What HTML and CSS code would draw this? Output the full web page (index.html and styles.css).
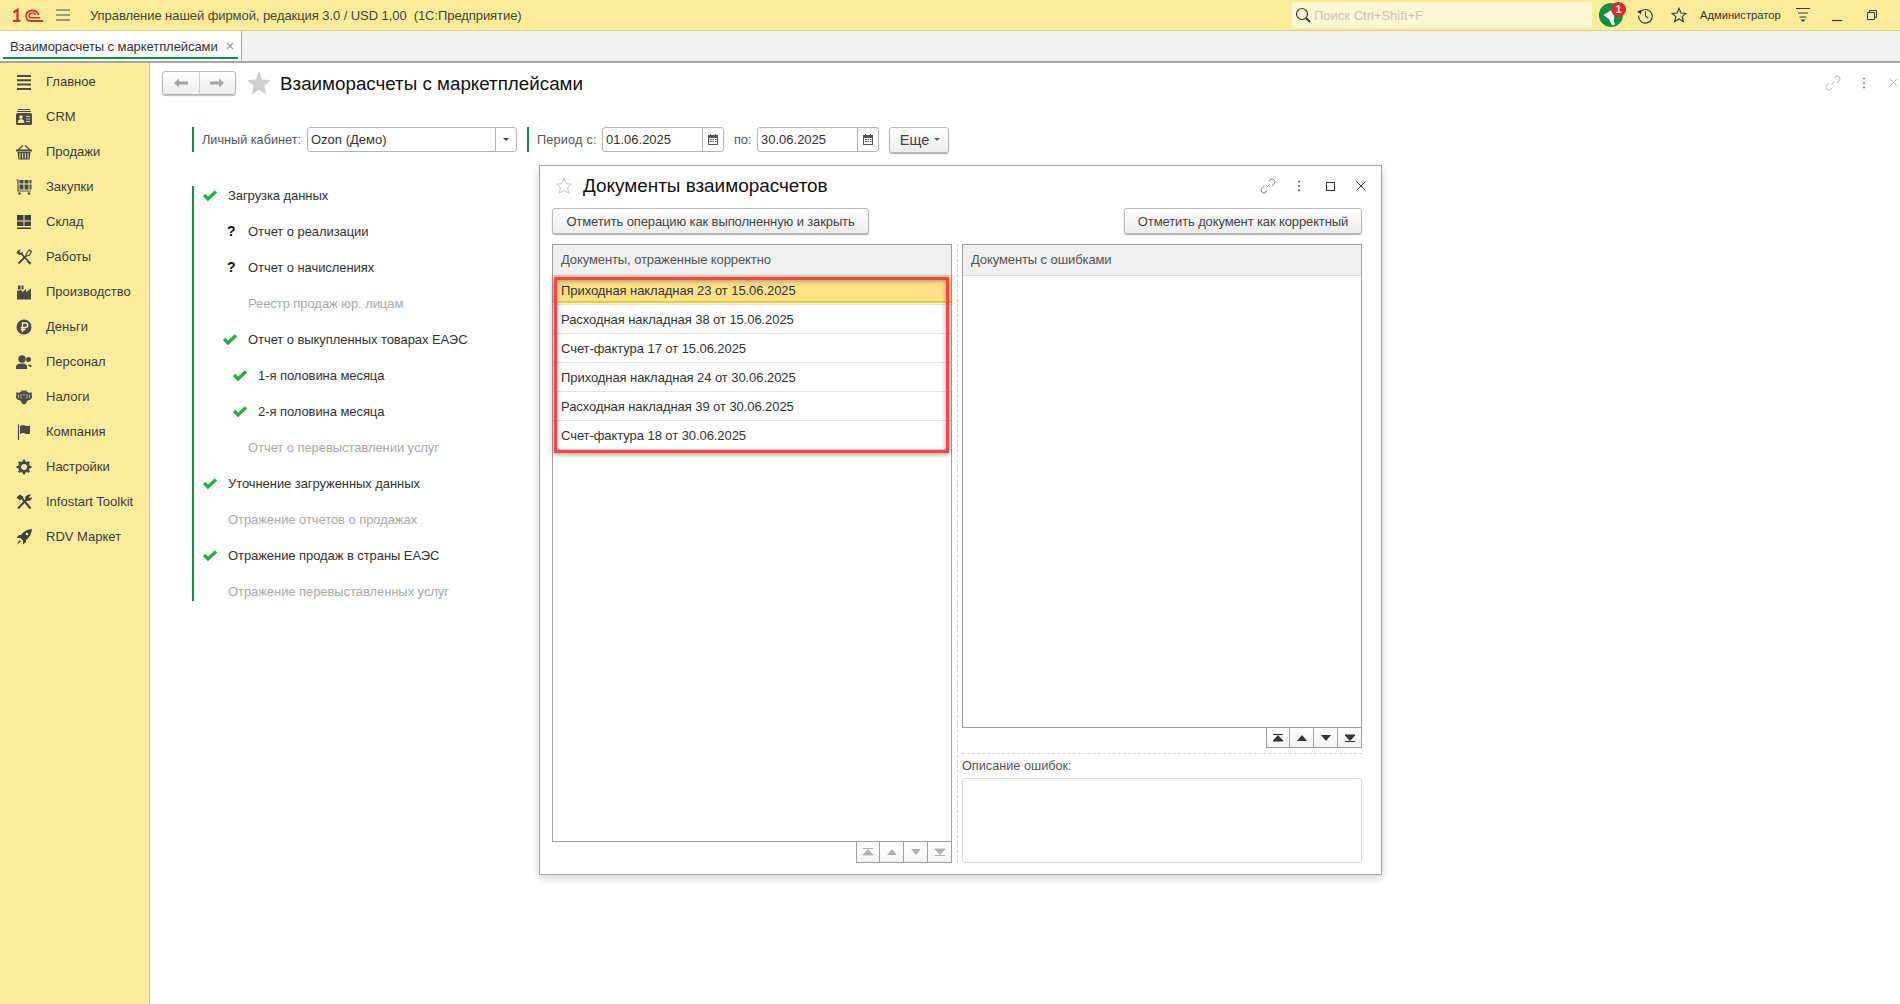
FILE: index.html
```html
<!DOCTYPE html>
<html lang="ru">
<head>
<meta charset="utf-8">
<title>Взаиморасчеты с маркетплейсами</title>
<link rel="stylesheet" href="styles.css">
</head>
<body>
<div class="app">
  <header class="topbar">
    <svg class="logo" viewBox="0 0 30 14"><path d="M.5 4.500 4.500 1.800V13" fill="none" stroke="#d5342c" stroke-width="2.300"/><path d="M0 12.900H7.500" stroke="#d5342c" stroke-width="2"/><path d="M25.500 7A6.500 6.500 0 0 0 13 7.500Q13 13 18 13H30" fill="none" stroke="#d5342c" stroke-width="1.800"/><path d="M22.500 7A3.500 3.500 0 0 0 16 7.500Q16 9.800 19 9.800H27" fill="none" stroke="#d5342c" stroke-width="1.600"/></svg>
    <svg class="burger" viewBox="0 0 14 12"><path d="M0 1H14M0 6H14M0 11H14" stroke="#4a4a3a" stroke-width="1"/></svg>
    <div class="apptitle">Управление нашей фирмой, редакция 3.0 / USD 1,00&nbsp; (1С:Предприятие)</div>
    <div class="search">
      <svg class="search-ico" viewBox="0 0 16 16"><circle cx="7" cy="7" r="5.500" fill="none" stroke="#333" stroke-width="1.200"/><path d="M11 11 15 15" stroke="#333" stroke-width="2"/></svg>
      <span class="search-ph">Поиск Ctrl+Shift+F</span>
    </div>
    <div class="notify">
      <svg class="notify-ico" viewBox="0 0 24 24"><circle cx="12" cy="12" r="12" fill="#0a9142"/><path d="M4.500 12 15 5.500V20Z" fill="#fff"/><path d="M10 16.500H14L16 21.500 13.500 22.500Z" fill="#fff"/></svg>
      <span class="badge">1</span>
    </div>
    <svg class="ti ti-hist" viewBox="0 0 18 18"><path d="M3.200 5.500A7.200 7.200 0 1 1 1.800 9" fill="none" stroke="#3a3a30" stroke-width="1.200"/><path d="M0 5 4.500 3 4.500 8Z" fill="#3a3a30"/><path d="M9 4.500V9.500L12 12" fill="none" stroke="#3a3a30" stroke-width="1.200"/></svg>
    <svg class="ti ti-star" viewBox="0 0 18 18"><path d="M9 1.500 11.200 6.700 16.800 7.200 12.500 10.800 13.900 16.300 9 13.400 4.100 16.300 5.500 10.800 1.200 7.200 6.800 6.700Z" fill="none" stroke="#3a3a30" stroke-width="1.300"/></svg>
    <span class="user">Администратор</span>
    <svg class="ti ti-menu" viewBox="0 0 14 16"><path d="M0 1.500H14M2 6H12M3.500 10H10.500" stroke="#3a3a30"/><path d="M4.500 12.500H9.500L7 15Z" fill="#3a3a30"/></svg>
    <svg class="ti ti-min" viewBox="0 0 10 14"><path d="M0 12.500H10" stroke="#3a3a30" stroke-width="1.200"/></svg>
    <svg class="ti ti-res" viewBox="0 0 10 10"><path d="M2.500 2V.5H9.500V7.500H7.500M.5 2.500H7.500V9.500H.5Z" fill="none" stroke="#3a3a30"/></svg>
  </header>

  <nav class="tabbar">
    <div class="tab">
      <span class="tab-text">Взаиморасчеты с маркетплейсами</span>
      <svg class="tab-x" viewBox="0 0 8 8"><path d="M1 1 7 7M7 1 1 7" stroke="#9a9a9a" stroke-width="1.300"/></svg>
    </div>
  </nav>

  <div class="body">
    <aside class="sidebar">
      <div class="sb-item"><svg class="sb-ico" viewBox="0 0 16 16"><path d="M1 2H15M1 6.300H15M1 10.600H15M1 14.900H15" stroke="#4a4a4a" stroke-width="2"/></svg><span>Главное</span></div>
      <div class="sb-item"><svg class="sb-ico" viewBox="0 0 16 16"><path d="M2 .5H14M1 2.500H15" stroke="#4a4a4a"/><rect x="0" y="4" width="16" height="12" rx="1.500" fill="#4a4a4a"/><circle cx="5" cy="8" r="1.800" fill="#fbec9c"/><path d="M2 13.500Q2 10.500 5 10.500T8 13.500ZM10 7.500H14M10 10H14M10 12.500H14" fill="#fbec9c" stroke="#fbec9c" stroke-width=".8"/></svg><span>CRM</span></div>
      <div class="sb-item"><svg class="sb-ico" viewBox="0 0 16 16"><path d="M2 6 7 1.500M14 6 9 1.500" stroke="#4a4a4a" stroke-width="1.200"/><rect x="0" y="5.500" width="16" height="2" fill="#4a4a4a"/><path d="M1.500 8H14.500L13.500 15.500H2.500Z" fill="#4a4a4a"/><path d="M4 9V14.500M6.700 9V14.500M9.300 9V14.500M12 9V14.500" stroke="#fbec9c"/></svg><span>Продажи</span></div>
      <div class="sb-item"><svg class="sb-ico" viewBox="0 0 16 16"><path d="M.5 1H2V12H15" fill="none" stroke="#4a4a4a" stroke-width="1.200"/><path d="M3.500 1H7.500V4.500H3.500ZM8.500 1H12.500V4.500H8.500ZM3.500 5.500H7.500V10.500H3.500ZM8.500 5.500H12.500V10.500H8.500ZM13.500 1H15.500V4.500H13.500ZM13.500 5.500H15.500V10.500H13.500Z" fill="#4a4a4a"/><circle cx="3.500" cy="14.500" r="1.300" fill="#4a4a4a"/><circle cx="13" cy="14.500" r="1.300" fill="#4a4a4a"/></svg><span>Закупки</span></div>
      <div class="sb-item"><svg class="sb-ico" viewBox="0 0 16 16"><path d="M1 1H7.500V6.500H1ZM8.500 1H15V6.500H8.500ZM1 7.500H7.500V12H1ZM8.500 7.500H15V12H8.500ZM1 13.500H15V15H1Z" fill="#3f3f3f"/></svg><span>Склад</span></div>
      <div class="sb-item"><svg class="sb-ico" viewBox="0 0 16 16"><path d="M2.500 14.500 10 7M5.500 5 13 13" stroke="#4a4a4a" stroke-width="1.800" fill="none"/><path d="M.5 4Q1 .5 5 .5L3.500 2.500 5 4 7 2.500Q7.500 6 3.500 6Z" fill="#4a4a4a"/><path d="M10 5.500 13 1 15.500 2.500 13.500 6 10.500 7Z" fill="none" stroke="#4a4a4a" stroke-width="1.200"/><path d="M12 11.500 15.500 14 14 15.800 11 13Z" fill="#4a4a4a"/></svg><span>Работы</span></div>
      <div class="sb-item"><svg class="sb-ico" viewBox="0 0 16 16"><path d="M1 15.500V7L5 6 6.500 8 10 5V8L15 4.500V15.500Z" fill="#4a4a4a"/><path d="M2 1.500H4.500V5.500H2ZM5.500 1.500H7.500V5.500H5.500Z" fill="#4a4a4a"/></svg><span>Производство</span></div>
      <div class="sb-item"><svg class="sb-ico" viewBox="0 0 16 16"><circle cx="8" cy="8" r="7.500" fill="#4a4a4a"/><path d="M6.500 13V4H9.500A2.200 2.200 0 0 1 9.500 8.500H4.800M4.800 10.500H9.500" fill="none" stroke="#fbec9c" stroke-width="1.500"/></svg><span>Деньги</span></div>
      <div class="sb-item"><svg class="sb-ico" viewBox="0 0 16 16"><circle cx="6" cy="5" r="3.700" fill="#4a4a4a"/><path d="M0 15V12.500Q0 10.500 4 9.500H8Q11 10.500 11 12.500V15Z" fill="#4a4a4a"/><circle cx="12.500" cy="5.500" r="2.500" fill="#4a4a4a"/><path d="M12 10.500Q15.500 10.500 16 12.500L14.500 13 12 11.500Z" fill="#4a4a4a"/></svg><span>Персонал</span></div>
      <div class="sb-item"><svg class="sb-ico" viewBox="0 0 16 16"><path d="M6 3 5 1 8 2 11 1 10 3 11.500 2.500 13 4 15.500 3 16 8.500 14 11 11.500 11.500 10 14.500 8 15.500 6 14.500 4.500 11.500 2 11 0 8.500 .5 3 3 4 4.500 2.500Z" fill="#4a4a4a"/><path d="M2.500 5.500V9M5 5V9.500M8 4.500V7M11 5V9.500M13.500 5.500V9" stroke="#fbec9c" stroke-width=".7"/></svg><span>Налоги</span></div>
      <div class="sb-item"><svg class="sb-ico" viewBox="0 0 16 16"><path d="M2.500 .5V16" stroke="#4a4a4a" stroke-width="1.200"/><path d="M4 2Q8 .5 9 1.500T14 1.500V9.500Q11 10.500 9 9.500T4 10Z" fill="#4a4a4a"/></svg><span>Компания</span></div>
      <div class="sb-item"><svg class="sb-ico" viewBox="0 0 16 16"><circle cx="8" cy="8" r="4.500" fill="none" stroke="#4a4a4a" stroke-width="3"/><path d="M8 .5V15.500M.5 8H15.500M2.700 2.700 13.300 13.300M13.300 2.700 2.700 13.300" stroke="#4a4a4a" stroke-width="2.200" stroke-dasharray="2.800 9.400"/></svg><span>Настройки</span></div>
      <div class="sb-item"><svg class="sb-ico" viewBox="0 0 16 16"><path d="M2 14.500 11 5M5 3 14.500 14.500" stroke="#3f3f3f" stroke-width="2"/><path d="M.5 3.500 4 .5 7.500 3 4 6.500Z" fill="#3f3f3f"/><path d="M9 4Q10 0 15 .5L13 3 14 4.500 16 3Q16 7 11.500 7Z" fill="#3f3f3f"/></svg><span>Infostart Toolkit</span></div>
      <div class="sb-item"><svg class="sb-ico" viewBox="0 0 16 16"><path d="M16 0Q9 .5 5 6L3 6 .5 9H4.500L7 11.500V15.500L10 13V11Q15.500 7 16 0Z" fill="#3f3f3f"/><circle cx="11" cy="5" r="1.300" fill="#fbec9c"/><path d="M3.500 11 5 12.500 1 15.500Z" fill="#3f3f3f"/></svg><span>RDV Маркет</span></div>
    </aside>

    <main class="content">
      <div class="head">
        <div class="navbtns">
          <button class="navbtn"><svg viewBox="0 0 14 10"><path d="M0 5 5 .5V3.500H14V6.500H5V9.500Z" fill="#a5a5a5"/></svg></button>
          <button class="navbtn"><svg viewBox="0 0 14 10"><path d="M14 5 9 .5V3.500H0V6.500H9V9.500Z" fill="#a5a5a5"/></svg></button>
        </div>
        <svg class="head-star" viewBox="0 0 24 24"><path d="M12 0 15.300 8.500 24 9.200 17.300 14.800 19.400 23.500 12 18.700 4.600 23.500 6.700 14.800 0 9.200 8.700 8.500Z" fill="#cfcfcf"/></svg>
        <h1 class="page-title">Взаиморасчеты с маркетплейсами</h1>
        <div class="head-tools">
          <svg class="link-ico dim" viewBox="0 0 16 16"><path d="M6.500 9.500 9.500 6.500M9 3 11 1.300Q12.500 .3 14 1.800T14.700 5L11.800 8M7 13 5 14.700Q3.500 15.700 2 14.200T1.300 11L4.200 8" fill="none" stroke="#b5b5b5"/></svg>
          <svg class="dots dim" viewBox="0 0 4 12"><circle cx="2" cy="1.500" r="1.100" fill="#8c8c8c"/><circle cx="2" cy="6" r="1.100" fill="#8c8c8c"/><circle cx="2" cy="10.500" r="1.100" fill="#8c8c8c"/></svg>
          <svg class="close-ico" viewBox="0 0 10 10"><path d="M1 1 9 9M9 1 1 9" stroke="#b0b0b0"/></svg>
        </div>
      </div>

      <div class="filters">
        <div class="mark"></div>
        <label class="lbl lbl-acc">Личный кабинет:</label>
        <div class="field f-acc"><span class="val">Ozon (Демо)</span><span class="seg"><i class="arr"></i></span></div>
        <div class="mark mark-2"></div>
        <label class="lbl lbl-from">Период с:</label>
        <div class="field f-date"><span class="val">01.06.2025</span><span class="seg seg-cal"><svg class="cal" viewBox="0 0 10 11"><path d="M2.500 0V2M7.500 0V2" stroke="#555"/><rect x=".5" y="1.500" width="9" height="9" fill="none" stroke="#555"/><path d="M1 2H9V4H1ZM2 5H4V6H2ZM4.500 5H6V6H4.500ZM7 5H8.500V6H7ZM2 7H4V8H2ZM4.500 7H6V8H4.500ZM7 7H8.500V8H7Z" fill="#555"/></svg></span></div>
        <label class="lbl lbl-to">по:</label>
        <div class="field f-date"><span class="val">30.06.2025</span><span class="seg seg-cal"><svg class="cal" viewBox="0 0 10 11"><path d="M2.500 0V2M7.500 0V2" stroke="#555"/><rect x=".5" y="1.500" width="9" height="9" fill="none" stroke="#555"/><path d="M1 2H9V4H1ZM2 5H4V6H2ZM4.500 5H6V6H4.500ZM7 5H8.500V6H7ZM2 7H4V8H2ZM4.500 7H6V8H4.500ZM7 7H8.500V8H7Z" fill="#555"/></svg></span></div>
        <button class="btn btn-more">Еще<i class="arr arr-more"></i></button>
      </div>

      <ul class="steps">
        <li class="step l0"><svg class="chk" viewBox="0 0 14 11"><path d="M1 5 5 9 13 1.500" fill="none" stroke="#22b03a" stroke-width="3.300"/></svg><span>Загрузка данных</span></li>
        <li class="step l1"><span class="q">?</span><span>Отчет о реализации</span></li>
        <li class="step l1"><span class="q">?</span><span>Отчет о начислениях</span></li>
        <li class="step l1 off"><span>Реестр продаж юр. лицам</span></li>
        <li class="step l1"><svg class="chk" viewBox="0 0 14 11"><path d="M1 5 5 9 13 1.500" fill="none" stroke="#22b03a" stroke-width="3.300"/></svg><span>Отчет о выкупленных товарах ЕАЭС</span></li>
        <li class="step l2"><svg class="chk" viewBox="0 0 14 11"><path d="M1 5 5 9 13 1.500" fill="none" stroke="#22b03a" stroke-width="3.300"/></svg><span>1-я половина месяца</span></li>
        <li class="step l2"><svg class="chk" viewBox="0 0 14 11"><path d="M1 5 5 9 13 1.500" fill="none" stroke="#22b03a" stroke-width="3.300"/></svg><span>2-я половина месяца</span></li>
        <li class="step l1 off"><span>Отчет о перевыставлении услуг</span></li>
        <li class="step l0"><svg class="chk" viewBox="0 0 14 11"><path d="M1 5 5 9 13 1.500" fill="none" stroke="#22b03a" stroke-width="3.300"/></svg><span>Уточнение загруженных данных</span></li>
        <li class="step l0 off"><span>Отражение отчетов о продажах</span></li>
        <li class="step l0"><svg class="chk" viewBox="0 0 14 11"><path d="M1 5 5 9 13 1.500" fill="none" stroke="#22b03a" stroke-width="3.300"/></svg><span>Отражение продаж в страны ЕАЭС</span></li>
        <li class="step l0 off"><span>Отражение перевыставленных услуг</span></li>
      </ul>

      <section class="modal">
        <div class="m-head">
          <svg class="m-star" viewBox="0 0 18 18"><path d="M9 1.500 11.200 6.700 16.800 7.200 12.500 10.800 13.900 16.300 9 13.400 4.100 16.300 5.500 10.800 1.200 7.200 6.800 6.700Z" fill="none" stroke="#c4c4c4"/></svg>
          <h2 class="m-title">Документы взаиморасчетов</h2>
          <div class="m-tools">
            <svg class="link-ico" viewBox="0 0 16 16"><path d="M6.500 9.500 9.500 6.500M9 3 11 1.300Q12.500 .3 14 1.800T14.700 5L11.800 8M7 13 5 14.700Q3.500 15.700 2 14.200T1.300 11L4.200 8" fill="none" stroke="#777"/></svg>
            <svg class="dots" viewBox="0 0 4 12"><circle cx="2" cy="1.500" r="1.100" fill="#666"/><circle cx="2" cy="6" r="1.100" fill="#666"/><circle cx="2" cy="10.500" r="1.100" fill="#666"/></svg>
            <svg class="m-square" viewBox="0 0 9 9"><rect x=".5" y=".5" width="8" height="8" fill="none" stroke="#333"/></svg>
            <svg class="m-close" viewBox="0 0 10 10"><path d="M.5 .5 9.500 9.500M9.500 .5 .5 9.500" stroke="#444"/></svg>
          </div>
        </div>
        <div class="m-actions">
          <button class="btn btn-op">Отметить операцию как выполненную и закрыть</button>
          <button class="btn btn-doc">Отметить документ как корректный</button>
        </div>
        <div class="m-cols">
          <div class="col col-left">
            <div class="table">
              <div class="t-head">Документы, отраженные корректно</div>
              <div class="row row-sel">Приходная накладная 23 от 15.06.2025</div>
              <div class="row">Расходная накладная 38 от 15.06.2025</div>
              <div class="row">Счет-фактура 17 от 15.06.2025</div>
              <div class="row">Приходная накладная 24 от 30.06.2025</div>
              <div class="row">Расходная накладная 39 от 30.06.2025</div>
              <div class="row">Счет-фактура 18 от 30.06.2025</div>
            </div>
            <div class="pager pager-off">
              <span class="pg"><svg viewBox="0 0 12 8"><path d="M1 .5H11M6 1.500 1 7H11Z" stroke="currentColor" fill="currentColor"/></svg></span>
              <span class="pg"><svg viewBox="0 0 12 8"><path d="M6 1 1 7H11Z" fill="currentColor"/></svg></span>
              <span class="pg"><svg viewBox="0 0 12 8"><path d="M6 7 1 1H11Z" fill="currentColor"/></svg></span>
              <span class="pg"><svg viewBox="0 0 12 8"><path d="M1 7.500H11M6 6.500 1 1H11Z" stroke="currentColor" fill="currentColor"/></svg></span>
            </div>
            <div class="redbox"></div>
          </div>
          <div class="col col-right">
            <div class="table">
              <div class="t-head">Документы с ошибками</div>
            </div>
            <div class="pager">
              <span class="pg"><svg viewBox="0 0 12 8"><path d="M1 .5H11M6 1.500 1 7H11Z" stroke="currentColor" fill="currentColor"/></svg></span>
              <span class="pg"><svg viewBox="0 0 12 8"><path d="M6 1 1 7H11Z" fill="currentColor"/></svg></span>
              <span class="pg"><svg viewBox="0 0 12 8"><path d="M6 7 1 1H11Z" fill="currentColor"/></svg></span>
              <span class="pg"><svg viewBox="0 0 12 8"><path d="M1 7.500H11M6 6.500 1 1H11Z" stroke="currentColor" fill="currentColor"/></svg></span>
            </div>
            <div class="err">
              <div class="err-lbl">Описание ошибок:</div>
              <div class="err-box"></div>
            </div>
          </div>
        </div>
      </section>
    </main>
  </div>
</div>
</body>
</html>
```
FILE: styles.css
```css
* { box-sizing: border-box; }
html, body { margin: 0; height: 100%; overflow: hidden; }
body { font: 13px "Liberation Sans", Arial, sans-serif; letter-spacing: -.07px; color: #333; background: #fff; }
svg { display: block; flex: none; }
button { font: inherit; letter-spacing: inherit; }

.app { display: flex; flex-direction: column; height: 100vh; }

.topbar { height: 31px; flex: none; display: flex; align-items: center; background: #fbec9c; border-bottom: 1px solid #e5d47c; }
.logo { width: 30px; height: 14px; margin-left: 13px; }
.burger { width: 14px; height: 12px; margin-left: 13px; }
.apptitle { margin-left: 20px; width: 1202px; color: #4a4530; white-space: nowrap; }
.search { width: 300px; height: 26px; background: #fdf6d2; border-radius: 3px; display: flex; align-items: center; padding-left: 3px; letter-spacing: 0; }
.search-ico { width: 16px; height: 16px; }
.search-ph { margin-left: 3px; color: #c9c7bb; }
.notify { position: relative; width: 24px; height: 24px; margin-left: 7px; }
.notify-ico { width: 24px; height: 24px; }
.badge { position: absolute; top: -1px; left: 12px; width: 15px; height: 15px; border-radius: 50%; background: #e8232b; color: #fff; font-size: 10px; font-weight: 700; line-height: 15px; text-align: center; letter-spacing: 0; }
.ti { flex: none; }
.ti-hist { width: 17px; height: 17px; margin-left: 14px; }
.ti-star { width: 16px; height: 16px; margin-left: 17px; }
.user { margin-left: 13px; width: 83px; font-size: 11.200px; letter-spacing: 0; color: #3c3528; white-space: nowrap; }
.ti-menu { width: 14px; height: 16px; margin-left: 13px; }
.ti-min { width: 10px; height: 14px; margin-left: 22px; }
.ti-res { width: 10px; height: 10px; margin-left: 25px; }

.tabbar { height: 32px; flex: none; background: #f0f0f0; border-bottom: 2px solid #a8a8a8; display: flex; }
.tab { width: 242px; height: 30px; background: #fff; border-right: 1px solid #a8a8a8; display: flex; align-items: center; padding: 0 0 0 10px; position: relative; }
.tab::after { content: ""; position: absolute; left: 3px; right: 3px; bottom: 2px; height: 2px; background: #0a9142; }
.tab-text { color: #333; white-space: nowrap; }
.tab-x { width: 8px; height: 8px; margin-left: 8px; }

.body { flex: 1; display: flex; min-height: 0; }
.sidebar { width: 150px; flex: none; background: #fbec9c; border-right: 1px solid #d8c878; padding-top: 1px; letter-spacing: 0; }
.sb-item { height: 35px; display: flex; align-items: center; padding-left: 16px; gap: 14px; color: #3c3c3c; font-size: 13px; white-space: nowrap; }
.sb-ico { width: 16px; height: 16px; }

.content { flex: 1; position: relative; padding: 7px 0 0 12px; min-width: 0; }
.head { height: 25px; display: flex; align-items: center; }
.navbtns { display: flex; width: 74px; height: 24px; border: 1px solid #b8b8b8; border-radius: 3px; box-shadow: 0 1px 1px #bbb; background: linear-gradient(#fff, #ececec); }
.navbtn { flex: 1; border: 0; padding: 0; background: none; display: flex; align-items: center; justify-content: center; }
.navbtn + .navbtn { border-left: 1px solid #cfcfcf; }
.navbtn svg { width: 14px; height: 10px; }
.head-star { width: 24px; height: 24px; margin-left: 11px; }
.page-title { margin: 2px 0 0 9px; font-size: 18.800px; font-weight: 400; color: #111; white-space: nowrap; letter-spacing: 0; }
.head-tools { margin-left: auto; display: flex; align-items: center; }
.head-tools .link-ico { width: 16px; height: 16px; margin-right: 21px; }
.head-tools .dots { width: 4px; height: 12px; margin-right: 23px; }
.close-ico { width: 9px; height: 9px; margin-right: 2px; }

.filters { display: flex; align-items: center; height: 25px; margin: 32px 0 0 30px; }
.mark { width: 2px; height: 25px; background: #0a9142; }
.mark-2 { margin-left: 10px; }
.lbl { color: #555; white-space: nowrap; font-size: 12.700px; }
.lbl-acc { margin-left: 8px; width: 105px; letter-spacing: 0; }
.lbl-from { margin-left: 8px; width: 65px; letter-spacing: .2px; }
.lbl-to { margin-left: 10px; width: 23px; letter-spacing: 0; }
.field { height: 25px; border: 1px solid #b4b4b4; border-radius: 3px; display: flex; align-items: center; background: #fff; letter-spacing: 0; }
.f-acc { width: 210px; }
.f-date { width: 122px; }
.val { flex: 1; padding-left: 3px; color: #333; white-space: nowrap; }
.seg { width: 21px; height: 100%; border-left: 1px solid #b4b4b4; display: flex; align-items: center; justify-content: center; }
.arr { display: block; width: 0; height: 0; border: 3px solid transparent; border-top: 3px solid #444; border-bottom: 0; }
.cal { width: 10px; height: 11px; }
.btn { height: 26px; border: 1px solid #b8b8b8; border-radius: 3px; background: linear-gradient(#fff, #ededed); box-shadow: 0 1px 1px #aaa; color: #444; padding: 0; white-space: nowrap; letter-spacing: -.12px; }
.btn-more { width: 60px; margin-left: 10px; display: flex; align-items: center; justify-content: center; gap: 5px; font-size: 14.500px; letter-spacing: 0; padding-left: 2px; }
.arr-more { border-top-color: #666; }

.steps { list-style: none; margin: 34px 0 0 30px; padding: 0 0 0 9px; border-left: 2px solid #0a9142; width: 300px; display: flex; flex-direction: column; gap: 18.090px; }
.step { height: 18px; display: flex; align-items: center; position: relative; color: #333; white-space: nowrap; }
.step.off { color: #aaa; }
.l0 { padding-left: 25px; }
.l1 { padding-left: 45px; }
.l2 { padding-left: 55px; }
.chk { width: 14px; height: 11px; position: absolute; }
.l0 .chk { left: 0; }
.l1 .chk { left: 20px; }
.l2 .chk { left: 30px; }
.q { position: absolute; left: 24px; color: #111; font-weight: 700; font-size: 14px; }

.modal { position: absolute; left: 389px; top: 102px; width: 843px; height: 710px; background: #fff; border: 1px solid #a6a6a6; box-shadow: 0 3px 8px rgba(0,0,0,.18); padding: 0 19px 0 12px; display: flex; flex-direction: column; }
.m-head { height: 42px; padding-bottom: 2px; display: flex; align-items: center; flex: none; }
.m-star { width: 18px; height: 18px; margin-left: 3px; }
.m-title { margin: 0 0 0 10px; font-size: 18.900px; font-weight: 400; color: #111; white-space: nowrap; letter-spacing: 0; }
.m-tools { margin-left: auto; display: flex; align-items: center; }
.m-tools .link-ico { width: 16px; height: 16px; }
.m-tools .dots { width: 4px; height: 12px; margin-left: 21px; }
.m-square { width: 9px; height: 9px; margin-left: 25px; }
.m-close { width: 10px; height: 10px; margin-left: 21px; margin-right: -4px; }
.m-actions { display: flex; justify-content: space-between; height: 26px; flex: none; }
.btn-op { width: 317px; }
.btn-doc { width: 238px; }
.m-cols { display: grid; grid-template-columns: 400px 400px; gap: 10px; margin-top: 10px; height: 619px; flex: none; }
.col { display: flex; flex-direction: column; position: relative; min-height: 0; }
.col-left::after { content: ""; position: absolute; top: 0; bottom: 0; right: -6px; border-right: 1px dashed #d5d5d5; }
.table { flex: 1; border: 1px solid #a0a0a0; background: #fff; min-height: 0; }
.col-right .table { flex: none; height: 484px; }
.t-head { height: 31px; background: #f0f0f0; border-bottom: 1px solid #dcdcdc; padding-left: 8px; line-height: 30px; color: #555; letter-spacing: -.1px; }
.row { height: 29px; padding-left: 8px; line-height: 29px; border-bottom: 1px solid #e3e3e3; color: #333; white-space: nowrap; }
.row-sel { background: linear-gradient(#fde28a 0 25px, #fac81c 25px 27px, #fff 27px); }
.pager { display: flex; justify-content: flex-end; flex: none; color: #333; }
.pager-off { color: #b0b0b0; }
.pg { width: 24px; height: 21px; border: 1px solid #a0a0a0; border-top: 0; border-left-width: 0; background: linear-gradient(#fff, #f4f4f4); display: flex; align-items: center; justify-content: center; }
.pg:first-child { border-left-width: 1px; }
.pg svg { width: 12px; height: 8px; }
.col-right .pg { height: 20px; }
.err { flex: 1; margin-top: 5px; border-top: 1px dashed #d5d5d5; display: flex; flex-direction: column; min-height: 0; }
.err-lbl { height: 24px; line-height: 24px; color: #555; font-size: 12.700px; letter-spacing: 0; }
.err-box { height: 86px; border: 1px solid #d8d8d8; border-radius: 3px; }
.redbox { position: absolute; left: 2px; top: 33px; width: 395px; height: 176px; border: 3px solid #fb4345; box-shadow: 0 1px 5px rgba(0,0,0,.45), inset 0 1px 5px rgba(0,0,0,.35); }
```
